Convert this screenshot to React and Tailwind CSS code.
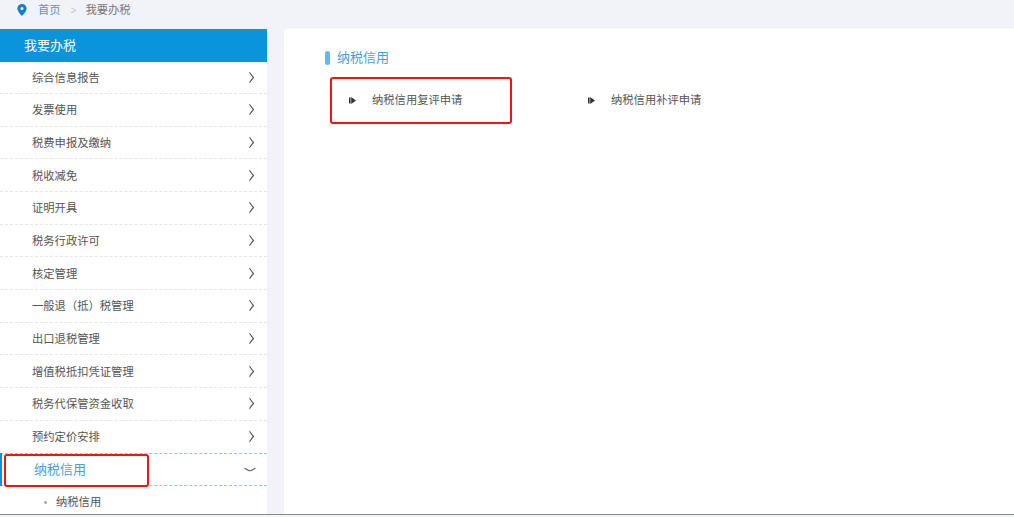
import React from "react";

const menus = [
  "综合信息报告",
  "发票使用",
  "税费申报及缴纳",
  "税收减免",
  "证明开具",
  "税务行政许可",
  "核定管理",
  "一般退（抵）税管理",
  "出口退税管理",
  "增值税抵扣凭证管理",
  "税务代保管资金收取",
  "预约定价安排",
];

function Arrow() {
  return (
    <svg className="-mt-[2px]" width="5" height="11" viewBox="0 0 5 11" fill="none" stroke="#555" strokeWidth="1.1">
      <path d="M0.5 0.3 C2 2.6 3.2 4.2 4.5 5.5 C3.2 6.8 2 8.4 0.5 10.7" />
    </svg>
  );
}

function Play() {
  return (
    <svg width="7" height="7" viewBox="0 0 7 7" fill="#333">
      <path d="M0 0.5 L1.6 0.5 L1.6 6.5 L0 6.5 Z M2.2 0 L7 3.5 L2.2 7 Z" />
    </svg>
  );
}

export default function App() {
  return (
    <div
      className="relative h-[517px] w-[1014px] overflow-hidden bg-[#f2f3f8] text-[11.3px] text-[#555]"
      style={{ fontFamily: '"Liberation Sans", "Noto Sans CJK SC", sans-serif' }}
    >
      <div className="flex h-[29px] items-start">
        <div className="flex h-[20px] items-center pl-[17px]">
          <svg width="10" height="12" viewBox="0 0 10 13">
            <path
              fillRule="evenodd"
              fill="#0f7fd0"
              d="M5 0 C2.2 0 0 2.2 0 4.8 C0 8 5 13 5 13 C5 13 10 8 10 4.8 C10 2.2 7.8 0 5 0 Z M5 3.2 A1.7 1.7 0 1 1 5 6.6 A1.7 1.7 0 1 1 5 3.2 Z"
            />
          </svg>
          <span className="ml-[11px] pt-px text-[#5a8fdc]">首页</span>
          <span className="ml-[10px] pt-px text-[10px] text-[#c4c4c4]">&gt;</span>
          <span className="ml-[9px] pt-px text-[#777]">我要办税</span>
        </div>
      </div>

      <div className="flex h-[485px] items-stretch">
        <aside className="w-[267px] overflow-hidden bg-white">
          <div className="flex h-[32.5px] items-center bg-[#0a94dc] pl-[24px] pt-px text-[13px] text-white">我要办税</div>
          {menus.map((m, i) => (
            <div
              key={m}
              className={
                i === menus.length - 1
                  ? "flex h-[32.65px] items-center justify-between pl-[32px] pr-[13px] pt-[2px]"
                  : "flex h-[32.65px] items-center justify-between border-b border-dashed border-[#e6e6e6] pl-[32px] pr-[13px] pt-[2px]"
              }
            >
              <span>{m}</span>
              <Arrow />
            </div>
          ))}
          <div className="flex h-[33px] items-center justify-between border-y border-dashed border-[#8cc8ee] pl-[34px] pr-[11px] text-[13px] text-[#4a9ee0]">
            <span>纳税信用</span>
            <svg width="12" height="5" viewBox="0 0 12 5" fill="none" stroke="#666" strokeWidth="1.1">
              <path d="M0.5 1 C3.5 3 5 3.8 6 3.8 C7 3.8 8.5 3 11.5 1" />
            </svg>
          </div>
          <div className="flex h-[32px] items-center pl-[44px] pt-[1px]">
            <span className="h-[3px] w-[3px] rounded-full bg-[#aaa]" />
            <span className="ml-[9px]">纳税信用</span>
          </div>
        </aside>

        <main className="ml-[17px] flex-1 rounded-tl bg-white pl-[41px] pt-[21px]">
          <div className="flex h-[16px] items-center">
            <span className="h-[14px] w-[5px] rounded-sm bg-[#5fb8ee]" />
            <span className="ml-[7px] text-[13px] text-[#4a9ee0]">纳税信用</span>
          </div>
          <div className="mt-[26px] flex items-center pl-[24px]">
            <div className="flex w-[239px] items-center">
              <Play />
              <span className="ml-[16px]">纳税信用复评申请</span>
            </div>
            <div className="flex items-center">
              <Play />
              <span className="ml-[16px]">纳税信用补评申请</span>
            </div>
          </div>
        </main>
      </div>

      <div className="absolute left-0 top-[514px] h-px w-full bg-[#888]" />

      {/* red note boxes over the screenshot */}
      <div className="absolute left-[330px] top-[77px] h-[47px] w-[182px] rounded-[3px] border-2 border-[#f01414]" />
      <div className="absolute left-[4px] top-[454px] h-[33px] w-[145px] rounded-[3px] border-2 border-[#f01414]" />
      <div className="absolute left-0 top-[453px] h-[33px] w-[2px] bg-[#0a94dc]" />
    </div>
  );
}
